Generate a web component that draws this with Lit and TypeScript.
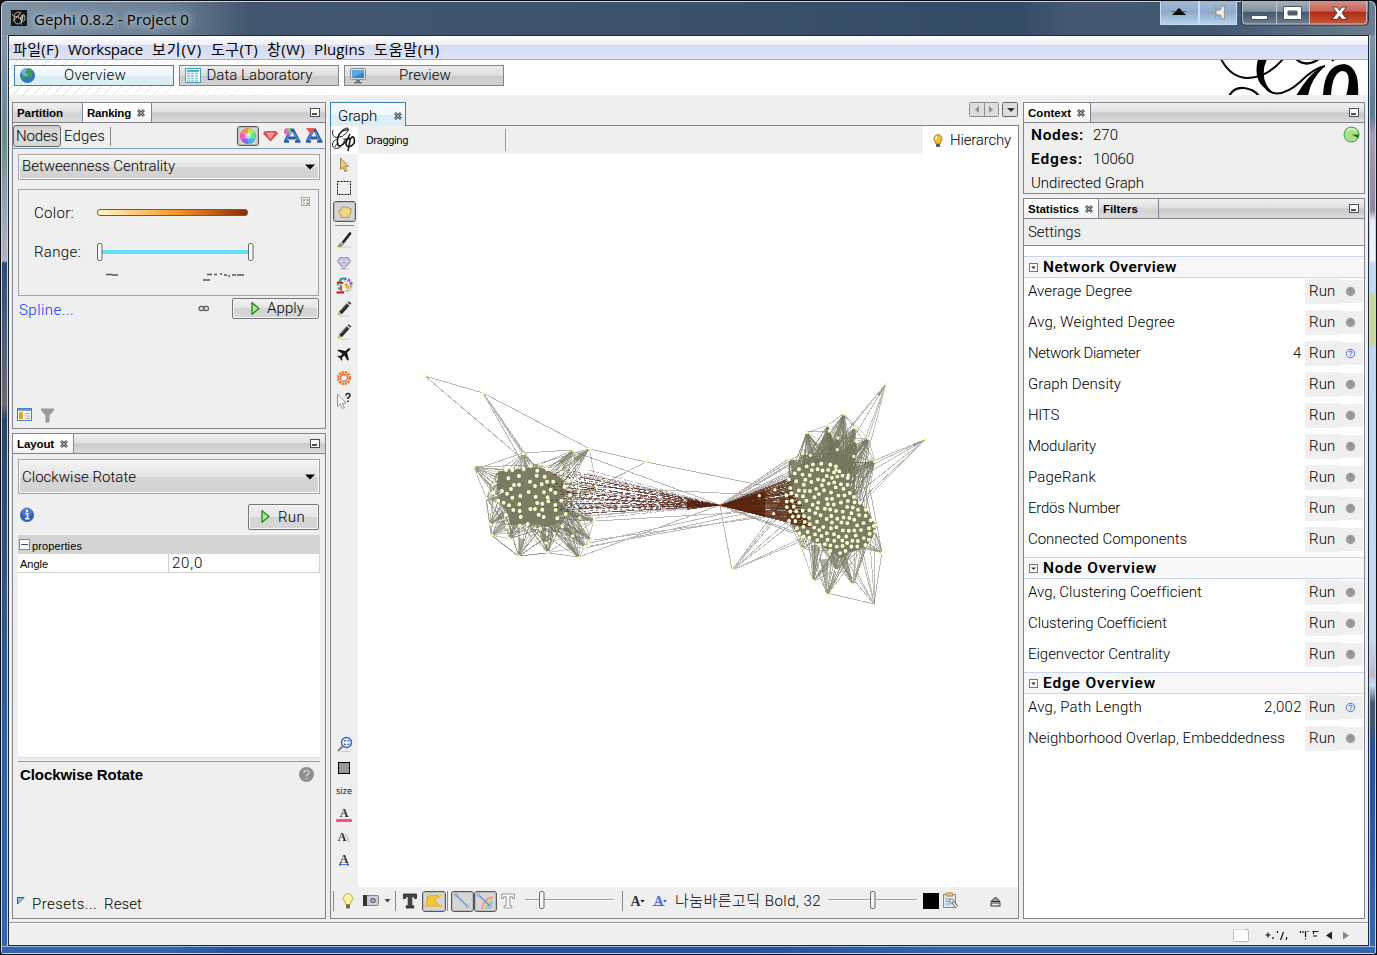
import { LitElement, html, svg, css } from "lit";
import { customElement } from "lit/decorators.js";

/* ---------- text fitted to a run length ---------- */
const FACES: Record<string, string> = {
  g: '300 15px Roboto, "Noto Sans CJK KR", sans-serif',
  gb: '600 15.5px Roboto, "Noto Sans CJK KR", sans-serif',
  tab: 'bold 11.5px "Liberation Sans", sans-serif',
  menu: '15px "Open Sans", "Noto Sans CJK KR", sans-serif',
  sm: '11px "Liberation Sans", sans-serif',
  vd: '10px "DejaVu Sans", sans-serif',
  hd: 'bold 15px "Liberation Sans", sans-serif',
};
const ctx = document.createElement("canvas").getContext("2d")!;
const t = (text: string, width: number, face = "g") => {
  ctx.font = FACES[face];
  const ls = (width - ctx.measureText(text).width) / text.length;
  return html`<span class="t ${face}" style="letter-spacing:${ls.toFixed(3)}px">${text}</span>`;
};
const faces = css`
  .t { white-space: pre; display: inline-block; line-height: 20px; height: 20px; }
  .g { font: 300 15px/20px Roboto, "Noto Sans CJK KR", sans-serif; }
  .gb { font: 600 15.5px/20px Roboto, "Noto Sans CJK KR", sans-serif; }
  .tab { font: bold 11.5px/20px "Liberation Sans", sans-serif; }
  .menu { font: 15px/20px "Open Sans", "Noto Sans CJK KR", sans-serif; }
  .sm { font: 11px/20px "Liberation Sans", sans-serif; }
  .vd { font: 10px/20px "DejaVu Sans", sans-serif; }
  .hd { font: bold 15px/20px "Liberation Sans", sans-serif; }
  :host { display: block; box-sizing: border-box; }
  * { box-sizing: border-box; }
  svg { display: block; flex: none; }
`;

/* an svg whose user units are window coordinates */
const art = (x: number, y: number, w: number, h: number, body: unknown) =>
  html`<svg width=${w} height=${h} viewBox="${x} ${y} ${w} ${h}">${body}</svg>`;

const closeX = html`<svg width="8" height="8" viewBox="0 0 8 8"><path d="M1 1L7 7M7 1L1 7" stroke="#4c4c4c" stroke-width="2.800"/><path d="M1 1L7 7M7 1L1 7" stroke="#ddd" stroke-width=".7"/></svg>`;
const minBox = html`<svg width="10" height="10" viewBox="0 0 10 10"><rect x=".5" y=".5" width="9" height="8" fill="#fff" stroke="#4a4f5a"/><rect x="2" y="5" width="5" height="2" fill="#4a4f5a"/></svg>`;
const play = html`<svg width="9" height="13" viewBox="0 0 9 13"><path d="M1 .8V12.200L8 6.500Z" fill="#b4e49c" stroke="#178a17" stroke-width="1.300"/></svg>`;
const bulb = (x: number, y: number) => svg`<g transform="translate(${x} ${y})"><path d="M5 .6a4.200 4.200 0 0 0-2.600 7.400l.6 2h4l.6-2A4.200 4.200 0 0 0 5 .6Z" fill="#f0c030" stroke="#a87a14" stroke-width=".9"/><path d="M4 2.500q-1.500 1-1 3" stroke="#fff" fill="none" stroke-width="1.500"/><rect x="3" y="10" width="4" height="3" rx="1" fill="#555"/></g>`;

/* ---------- statistics rows ---------- */
@customElement("stat-row")
class StatRow extends LitElement {
  static properties = { label: {}, w: { type: Number }, val: {}, vw: { type: Number } };
  declare label: string; declare w: number; declare val: string; declare vw: number;
  static styles = [faces, css`
    .row { display: flex; height: 31px; padding: 1px 0 0 4px; align-items: flex-start; }
    .name { flex: 1; padding-top: 2px; }
    .v { padding: 2px 3px 0 0; }
    .run { width: 35px; height: 25px; background: #efefef; padding: 2px 0 0 4px; }
    .q { width: 23px; height: 23px; background: #efefef; margin: 1px 1px 0 0; padding: 6px 0 0 5px; }
  `];
  render() {
    const q = this.val
      ? svg`<circle cx="5.500" cy="5.500" r="4.200" fill="#eef3ff" stroke="#4f74d8"/><path d="M4 4.500Q4 3 5.500 3T7 4.400Q7 5.200 5.500 5.900M5.500 7V8" fill="none" stroke="#3058c8"/>`
      : svg`<circle cx="5.500" cy="5.500" r="4.700" fill="#9d9d9d"/><path d="M4 4.500Q4 3 5.500 3T7 4.400Q7 5.200 5.500 5.900M5.500 7V8" fill="none" stroke="#868686"/>`;
    return html`<div class="row"><div class="name">${t(this.label, this.w)}</div>
      ${this.val ? html`<div class="v">${t(this.val, this.vw)}</div>` : ""}
      <div class="run">${t("Run", 26.5)}</div><div class="q"><svg width="11" height="11">${q}</svg></div></div>`;
  }
}

/* ---------- graph canvas ---------- */
let seed = 7;
const rnd = () => { seed = (seed * 16807) % 2147483647; return seed / 2147483647; };
type P = [number, number];
const pts = (s: string, ox: number, oy: number): P[] =>
  s.split(" ").map((p) => { const [a, b] = p.split(",").map(Number); return [ox + a / 3, oy + b / 3] as P; });
const inside = (p: P, poly: P[]) => {
  let r = false;
  for (let i = 0, j = poly.length - 1; i < poly.length; j = i++) {
    const [xi, yi] = poly[i], [xj, yj] = poly[j];
    if (yi > p[1] !== yj > p[1] && p[0] < ((xj - xi) * (p[1] - yi)) / (yj - yi) + xi) r = !r;
  }
  return r;
};
const fill = (poly: P[], n: number, d: number): P[] => {
  const out: P[] = [];
  const xs = poly.map((p) => p[0]), ys = poly.map((p) => p[1]);
  const x0 = Math.min(...xs), x1 = Math.max(...xs), y0 = Math.min(...ys), y1 = Math.max(...ys);
  for (let k = 0; k < 20000 && out.length < n; k++) {
    const p: P = [x0 + rnd() * (x1 - x0), y0 + rnd() * (y1 - y0)];
    if (inside(p, poly) && out.every((o) => Math.hypot(o[0] - p[0], o[1] - p[1]) > d)) out.push(p);
  }
  return out;
};
const line = (a: P, b: P) => `M${a[0].toFixed(1)} ${a[1].toFixed(1)}L${b[0].toFixed(1)} ${b[1].toFixed(1)}`;
const poly = (p: P[]) => p.map((q) => q.map((v) => v.toFixed(1)).join(",")).join(" ");
const dots = (p: P[]) => p.map((q) => `M${q[0].toFixed(1)} ${q[1].toFixed(1)}h0`).join("");

const L_OUT = pts("192,322 340,281 490,271 538,266 229,415 239,492 245,525 298,536 326,589 414,578 507,593 525,560 543,539 552,484 488,528 408,549 433,520 509,474 505,396 260,335 390,313 560,381 255,371", 410, 360);
const L_CORE = pts("288,330 307,330 341,328 363,318 382,332 411,328 454,338 476,362 464,380 295,355 327,348 380,347 404,350 360,365 375,378 395,373 411,365 430,365 327,374 312,375 303,387 276,393 291,401 307,413 331,408 356,396 377,410 402,397 422,389 436,398 413,412 415,424 480,406 454,422 436,435 437,450 397,431 382,429 397,449 375,447 361,447 328,433 297,436 281,428 265,422 310,450 329,453 332,471 287,465 291,500 330,497 353,492 391,506 401,471 386,464 442,475 457,499 467,462 250,398", 410, 360);
const L_POLY = pts("262,335 300,329 340,326 370,320 412,330 440,345 462,362 458,385 478,396 462,410 456,430 462,450 442,470 450,486 430,494 408,502 385,494 350,493 300,495 297,475 290,455 266,423 274,400 260,385 266,365", 410, 360);
const FAR = pts("648,41 768,208 187,600 614,706", 670, 370);
const R_OUT = pts("522,132 474,166 410,188 555,173 596,206 558,213 504,204 478,183 614,275 398,251 357,269 421,256 502,239 551,259 268,377 315,359 396,536 430,633 472,675 499,601 550,644 637,548 620,464 535,315 311,431 498,300", 670, 370);
const R_POLY = pts("355,330 375,305 405,285 460,275 500,285 535,320 541,370 575,403 598,430 612,465 618,480 600,515 565,540 535,548 515,565 480,543 440,520 395,498 375,480 355,450 345,390", 670, 370);
const R_CORE = fill(R_POLY, 172, 5.200);
const HUB: P = [720.5, 505.5];

const spray = (outs: P[], core: P[], reach: number, n: number) => {
  let d = "";
  for (const o of outs) {
    const near = [...core].sort((a, b) => Math.hypot(a[0] - o[0], a[1] - o[1]) - Math.hypot(b[0] - o[0], b[1] - o[1])).slice(0, reach);
    for (let i = 0; i < n; i++) d += line(o, near[Math.floor(rnd() * near.length)]);
  }
  return d;
};
const mesh = (outs: P[], max: number, p: number) => {
  let d = "";
  outs.forEach((a, i) => outs.slice(i + 1).forEach((b) => {
    if (Math.hypot(a[0] - b[0], a[1] - b[1]) < max && rnd() < p) d += line(a, b);
  }));
  return d;
};
/* thin wedges where many edges meet at one node */
const wedges = (outs: P[], c: P, half: number, reach: number) => outs.map(([x, y]) => {
  const dx = c[0] - x, dy = c[1] - y, l = Math.hypot(dx, dy) || 1;
  const ex = x + (dx / l) * reach, ey = y + (dy / l) * reach, nx = (-dy / l) * half, ny = (dx / l) * half;
  return `M${x.toFixed(1)} ${y.toFixed(1)}L${(ex + nx).toFixed(1)} ${(ey + ny).toFixed(1)}L${(ex - nx).toFixed(1)} ${(ey - ny).toFixed(1)}Z`;
}).join("");

@customElement("graph-view")
class GraphView extends LitElement {
  static styles = css`:host { display: block; } svg { display: block; background: #fff; }`;
  render() {
    const leftFan = Array.from({ length: 20 }, (_, i) => line([546 + rnd() * 22, 470 + i * 2.2], HUB)).join("");
    const leftSolid = Array.from({ length: 8 }, (_, i) => line([566 + rnd() * 20, 477 + i * 5.2], HUB)).join("");
    const leftGrey = Array.from({ length: 24 }, () => line([550 + rnd() * 46, 468 + rnd() * 62], HUB)).join("");
    const rightFan = Array.from({ length: 42 }, (_, i) => line([780 + rnd() * 14 + i * 0.5, 478 + i * 1.2], HUB)).join("");
    const rightGrey = Array.from({ length: 26 }, () => { const a = rnd(); return line([788 + a * 14, 462 + rnd() * 72], HUB); }).join("");
    const long = [
      [[425, 376], [483, 393]], [[425, 376], [519, 456]], [[483, 393], [590, 449]], [[483, 393], [524, 454]],
      [[483, 393], [530, 465]], [[484, 394], [534, 466]], [[483, 393], [521, 460]], [[523, 453], [573, 450]],
      [[590, 449], [646, 462]], [[646, 462], [760, 485]], [[646, 462], [597, 487]], [[575, 452], [720, 505]],
      [[720, 505], [732, 570]], [[579, 557], [720, 505]], [[594, 540], [780, 515]], [[590, 543], [740, 510]],
      [[590, 546], [770, 514]], [[596, 521], [784, 510]], [[597, 487], [760, 495]], [[585, 548], [784, 505]],
      [[720, 505], [802, 453]], [[720, 505], [788, 462]], [[720, 505], [790, 458]], [[474, 467], [530, 465]],
      [[827, 593], [874, 604]], [[882, 552], [874, 604]], [[870, 490], [882, 552]], [[860, 470], [872, 520]],
      [[806, 432], [828, 431]], [[828, 425], [843, 414]], [[843, 414], [855, 428]], [[482, 467], [523, 453]],
      [[491, 535], [518, 556]], [[518, 556], [548, 553]], [[548, 553], [579, 557]], [[486, 498], [491, 535]],
    ].map(([a, b]) => line(a as P, b as P)).join("");
    return html`<svg width="660" height="733" viewBox="358 154 660 733">
      <g fill="none" stroke-width="1" shape-rendering="crispEdges">
        <path d=${long} stroke="#77766a" stroke-opacity=".5"/>
        <path d=${spray(FAR, R_CORE, 34, 7)} stroke="#66654f" stroke-opacity=".4"/>
        <path d=${mesh(L_OUT, 42, 0.5)} stroke="#66654f" stroke-opacity=".36"/>
        <path d=${mesh(R_OUT, 44, 0.3)} stroke="#66654f" stroke-opacity=".36"/>
        <path d=${leftGrey} stroke="#7d7580" stroke-opacity=".5" stroke-dasharray="6 1 3 2"/>
        <path d=${rightGrey} stroke="#706a6a" stroke-opacity=".5"/>
      </g>
      <polygon points=${poly(L_POLY)} fill="#7d7c66"/>
      <polygon points=${poly(R_POLY)} fill="#7d7c66"/>
      <g fill="none" stroke="#6e6d58" stroke-opacity=".42" shape-rendering="crispEdges" stroke-width="1">
        ${L_OUT.map((o) => svg`<path d=${spray([o], L_CORE, 24, 9)}/><path d=${spray([o], L_CORE, 16, 7)}/>`)}
        ${R_OUT.map((o) => svg`<path d=${spray([o], R_CORE, 40, 10)}/><path d=${spray([o], R_CORE, 26, 8)}/>`)}
        ${R_OUT.slice(0, 14).map((o) => svg`<path d=${spray([o], R_CORE, 46, 10)}/><path d=${spray([o], R_CORE, 60, 9)}/>`)}
      </g>
      <g fill="#7a7963" fill-opacity=".6">
        <path d=${wedges([...R_OUT.slice(0, 9), ...R_OUT.slice(17, 21)], [818, 490], 4.500, 36)}/>
        <path d=${wedges(R_OUT.slice(9, 14), [818, 490], 8, 20)}/>
        <path d=${wedges(L_OUT.slice(1, 18), [530, 496], 3, 18)}/>
        <path d=${wedges(FAR.slice(0, 2), [818, 490], 1.500, 14)}/>
      </g>
      <polygon points=${poly(L_POLY)} fill="#7d7c66" fill-opacity=".75"/>
      <polygon points=${poly(R_POLY)} fill="#7d7c66" fill-opacity=".8"/>
      <g fill="none" shape-rendering="crispEdges">
        <path d=${leftFan} stroke="#541a08" stroke-opacity=".6" stroke-dasharray="3 3 2 4"/>
        <path d=${leftSolid} stroke="#4a1c10" stroke-opacity=".7" stroke-dasharray="14 2 6 5"/>
        <path d="M720 505L687 500V510ZM720 505L765 491V517Z" fill="#501800" fill-opacity=".7"/>
        <path d=${rightFan} stroke="#501800" stroke-opacity=".72"/>
      </g>
      <path d=${dots([...L_CORE, ...R_CORE])} stroke="#ffffcf" stroke-width="3.900" stroke-linecap="round"/>
      <path d=${dots([...L_OUT, ...R_OUT, ...FAR, [425, 376], [483, 393], [646, 462], [619, 506]])} stroke="#fcfcb8" stroke-width="3.300" stroke-linecap="round"/>
      <circle cx=${HUB[0]} cy=${HUB[1]} r="1.300" fill="#e03010"/>
    </svg>`;
  }
}

/* ---------- application ---------- */
const letterA = (x: number, y: number) =>
  svg`<path d="M${x + 1} ${y - 1}L${x + 6.500} ${y - 12}H${x + 8.500}L${x + 14} ${y - 1}M${x + 4} ${y - 4}H${x + 11}" fill="none" stroke="#2d5fa8" stroke-width="3"/><path d="M${x - 0.500} ${y - 0.500}h5M${x + 10.500} ${y - 0.500}h5.500" stroke="#2d5fa8" stroke-width="2.500"/><path d="M${x + 2} ${y - 2}L${x + 6.500} ${y - 11}M${x + 9} ${y - 10}L${x + 13} ${y - 2}" stroke="#7da7dd" stroke-width=".9"/>`;
const serifA = (x: number, y: number, c: string, s = 12, cls = "") =>
  svg`<text class=${cls} x=${x} y=${y} font-family="Liberation Serif, serif" font-weight="bold" font-size=${s} text-anchor="middle" fill=${c}>A</text>`;
const knob = (x: number, y: number) => svg`<rect x=${x} y=${y} width="4.500" height="17" rx="1.500" fill="#f6f6f6" stroke="#686868"/>`;
const pressed = (x: number, y: number, w: number, h: number) => svg`<rect x=${x + 0.5} y=${y + 0.5} width=${w - 1} height=${h - 1} rx="2.500" fill="#d6d6d6" stroke="#55585c"/><rect x=${x + 1.5} y=${y + 1.5} width=${w - 3} height=${h - 3} rx="1.500" fill="none" stroke="#bababa"/>`;
const pencil = (y: number) => svg`<path d="M340 ${y + 7}h10" stroke="#ccc"/><path d="M340.500 ${y + 4}L348 ${y - 4.500}" stroke="#2b2b2b" stroke-width="3.600"/><path d="M337.500 ${y + 6.500}l1.300-3.700 2.700 2.500Z" fill="#c8a850"/><path d="M348.800 ${y - 5.300}l1.300-1.400" stroke="#444" stroke-width="3.400"/><path d="M341 ${y + 2}l6-7" stroke="#777" stroke-width=".7"/>`;
const sep = (x: number, y: number, h: number) => svg`<path d="M${x + 0.5} ${y}v${h}" stroke="#8a8a8a"/>`;
const T = (x: number, f: string, s: string) => svg`<path d="M${x} 894h13v4.500h-2v-1.700h-2.700v9h2v2.200h-7.600v-2.200h2v-9h-2.700v1.700h-2Z" fill=${f} stroke=${s} stroke-width=".8"/>`;

const TOOLS = [
  svg`<path d="M340.500 158v11.500l2.500-2.300 2 4.500 2-.9-2-4.300 3.500-.3Z" fill="#eccb80" stroke="#9a7a35" stroke-width=".9"/>`,
  svg`<rect x="337.500" y="181.500" width="13" height="13" fill="none" stroke="#111" stroke-dasharray="2 1"/>`,
  svg`${pressed(333, 201, 23, 21)}<path d="M341 217.500v-2.500l-2.500-3 1-1.800 1.500.8v-3.500l1.800-1 1 1.300 1.400-1.300 1.500 1.300 1.300-.8 1.500 1.600 1.500 0v4l-2 3v2Z" fill="#f2d68c" stroke="#b08c44" stroke-width=".9"/>`,
];
const TOOLS2 = [
  svg`<path d="M340 247h11" stroke="#ccc"/><path d="M343 242.500L350 233.500" stroke="#262626" stroke-width="2.800" stroke-linecap="round"/><path d="M342 243l2 1.500" stroke="#999" stroke-width="2"/><path d="M337.500 247.500q.5-4 3-4.500l2.500 2q-1 2.500-5.500 2.500Z" fill="#a8975a"/>`,
  svg`<path d="M340 269h9" stroke="#ccc" stroke-width="1.500"/><path d="M340 257.500h8l3 3.500-7 8-7-8Z" fill="#b4b4d8" stroke="#8585a8" stroke-width=".9"/><path d="M337 261h14M341 261l3 7 3-7-3-3.500Z" fill="none" stroke="#e8e8fa" stroke-width=".8"/>`,
  svg`<circle cx="344" cy="285" r="6" fill="none" stroke="#30c068" stroke-width="2.500" stroke-dasharray="2.500 2"/><path d="M344 279a6 6 0 0 1 7 8" fill="none" stroke="#9a50d0" stroke-width="2.500" stroke-dasharray="2.500 1.500"/><path d="M340 279.500q2.500-1.500 5-.5" stroke="#3a90d0" stroke-width="2" fill="none"/><rect x="341" y="282" width="9" height="9" fill="#fff" stroke="#999" stroke-width=".6" transform="rotate(-12 345 286)"/><path d="M345.500 283.500l3 5.500" stroke="#f0b020" stroke-width="3.500"/><path d="M336.500 292.500h7.500M337 283q4-2 6 1" stroke="#c81820" stroke-width="1.800" fill="none"/><path d="M341 285v6" stroke="#d83038" stroke-width="1.500"/>`,
  pencil(309), pencil(332),
  svg`<path d="M350.500 348.500q-1.500-.8-3 .6l-2 2-7-1.600-1.200 1 5.300 3.200-2.200 2.400-2.300-.4-.8.9 2.600 1.500 1.500 2.700.9-.9-.3-2.300 2.500-2.200 3.100 5.300 1.200-1.200-1.700-7 2.200-2q1.500-1.300 1.200-2Z" fill="#1a1714"/>`,
  svg`<circle cx="344" cy="378" r="5.900" fill="none" stroke="#f4661c" stroke-width="2.200" stroke-dasharray="2.200 .89"/><circle cx="344" cy="378" r="3.500" fill="none" stroke="#f4661c" stroke-width="1.300"/>`,
  svg`<path d="M337.500 394v12.500l2.800-2.600 2.200 4.600 2-.9-2.200-4.500h4Z" fill="#fff" stroke="#888" stroke-width=".9"/><path d="M346 395.500q0-2 2-2t2 2q0 1.200-2 2.500v1M348 400.500v1.500" fill="none" stroke="#222" stroke-width="1.500"/>`,
];
const TOOLS3 = [
  svg`<path d="M341 751.500h9" stroke="#ccc"/><circle cx="346.500" cy="742.500" r="5" fill="#eef3ff" stroke="#3a62c8" stroke-width="1.400"/><path d="M344.500 741.500v-1h1.500M347.500 740.500h1.500v1M349 743.500v1h-1.500M346 744.500h-1.500v-1" fill="none" stroke="#2850b8"/><path d="M342.500 746.500L338 751" stroke="#888" stroke-width="2.300"/>`,
  svg`<rect x="338.500" y="762.500" width="11" height="11" fill="#999" stroke="#000"/>`,
  svg`<text x="344" y="794" font-family="Noto Sans, sans-serif" font-size="9" text-anchor="middle" fill="#222">size</text>`,
  svg`${serifA(344, 817, "#333")}<rect x="336" y="819" width="16" height="3" rx="1" fill="#ff4f80"/>`,
  svg`${serifA(342, 840.5, "#333", 12, "sh")}`,
  svg`${serifA(344, 863, "#333")}<path d="M339 864.500h10M341 863l-2 1.500 2 1.500M347 863l2 1.500-2 1.500" fill="none" stroke="#3260d0" stroke-width=".9"/>`,
];

const STATS: [string, number, [string, number, string?, number?][]][] = [
  ["Network Overview", 134, [["Average Degree", 104], ["Avg, Weighted Degree", 147], ["Network Diameter", 112, "4", 9], ["Graph Density", 93], ["HITS", 31], ["Modularity", 68], ["PageRank", 68], ["Erdös Number", 92], ["Connected Components", 159]]],
  ["Node Overview", 114, [["Avg, Clustering Coefficient", 173], ["Clustering Coefficient", 138], ["Eigenvector Centrality", 142]]],
  ["Edge Overview", 113, [["Avg, Path Length", 114, "2,002", 38], ["Neighborhood Overlap, Embeddedness", 257]]],
];

@customElement("app-root")
class AppRoot extends LitElement {
  static styles = [faces, css`
    :host { width: 1377px; height: 955px; color: #000; overflow: hidden; background: #0a0f18; }
    .sh { filter: drop-shadow(4px 1px 0 #ccc); }
    .win { height: 955px; border: 1px solid #0a0f18; border-radius: 7px 7px 4px 4px; overflow: hidden; display: grid; grid-template: 34px 911px 8px / 7px 1361px 7px;
      background: linear-gradient(90deg, #8093a5, #6b7f94 12%, #42576f 18%, #3c526b 45%, #344b68 74%, #445971 78%, #40566f 88%, #6c7e8f); box-shadow: inset 0 0 0 1px #c5d3e2; }
    .title { grid-column: 1 / 4; display: flex; padding-left: 10px; position: relative; }
    .glyph { padding-top: 9px; width: 23px; }
    .caption { padding: 8px 0 0 0; width: 170px; text-shadow: 0 0 5px #b4c1cd, 0 0 9px #b4c2cf, 0 0 12px #a9b8c6, 0 0 14px #a9b8c6; }
    .wctl { margin-left: auto; padding-right: 5px; }
    .edge { border: solid #c5d3e2; border-width: 0 1px; }
    .el { background: linear-gradient(#8195a8 0, #74889c 80px, #6d9183 110px, #8e9aa8 150px, #a8adb8 205px, #b0b4be 226px, #2f4a72 228px, #4e5e78 300px, #6f6870 370px, #2c4564 385px, #34557d 560px, #2f5f9d 700px, #3565ac); }
    .er { background: linear-gradient(#8195a8 0, #5b7a95 80px, #a49db0 100px, #90889c 175px, #e4edf8 185px, #f0f5fb 225px, #c2d9f5 228px, #c2d9f5 256px, #c6d79c 262px, #c6d79c 308px, #bcd6f4 315px, #c8dcf0 600px, #bcb8cc 640px, #c8dcf0 650px, #44586f 668px, #44586f 690px, #26519a 710px, #3565ac); }
    .foot { grid-column: 1 / 4; background: linear-gradient(90deg, #3565ac, #3565ac 12%, #24539a 17%, #24539a 55%, #3565ac 70%, #3565ac); border: 1px solid #c5d3e2; border-top-color: #9fb4d0; }
    .client { border: 1px solid #1c2a3a; background: #efefef; display: flex; flex-direction: column; padding: 0; }
    .menubar { height: 24px; background: linear-gradient(#fff, #eceff8 9px, #d3daed 9px, #dfe5f6); border-bottom: 1px solid #a9a9c0; display: flex; gap: 9px; padding: 3px 0 0 4px; }
    .banner { height: 35px; background: linear-gradient(90deg, #fff0, #fff 330px), repeating-linear-gradient(135deg, #fff 0 6.300px, #d8d8d8 6.300px 7.070px); display: flex; gap: 5px; padding: 5px 0 0 5px; }
    .mode { width: 160px; height: 21px; border: 1px solid #83838f; background: linear-gradient(#ececec, #dcdcdc 50%, #cacaca 50%, #d2d2d2); display: flex; padding-left: 4px; }
    .mode.on { border-color: #3c7fb1; background: linear-gradient(#f8fcff, #eaf6fc 50%, #dbeef7 50%, #dcecf3); }
    .mode .i { padding-top: 1px; width: 22px; }
    .mode .l { flex: 1; text-align: center; margin: -1px 24px 0 0; white-space: nowrap; }
    .mode .l.wide { margin-right: 25px; }
    .brand { margin: -5px 0 0 auto; }
    .main { height: 827px; display: grid; grid-template-columns: 314px 689px 342px; gap: 4px; padding: 7px 3px 3px; }
    .col { display: flex; flex-direction: column; gap: 4px; height: 817px; }
    .panel { border: 1px solid #83838f; background: #efefef; display: flex; flex-direction: column; }
    .ptop { height: 327px; }
    .grow { flex: 1; }
    .tabs { height: 20px; flex: none; border-bottom: 1px solid #83838f; background: linear-gradient(#f0f0f0 1px, #dedede 9px, #c9c9c9 10px, #dadada); display: flex; }
    .tb { height: 19px; border-right: 1px solid #83838f; padding: 1px 0 0 4px; display: flex; gap: 6px; align-items: center; background: linear-gradient(#f0f0f0 1px, #dedede 9px, #d2d2d2 10px, #dadada); }
    .tb svg { margin-top: -1px; }
    .tb.on { background: linear-gradient(#fff, #fff 50%, #f0f0f0); }
    .w69 { width: 70px; } .w69b { width: 69px; } .w61 { width: 61px; } .w67 { width: 67px; } .w75 { width: 75px; } .w60 { width: 60px; }
    .min { margin: 5px 5px 0 auto; }
    .rtool { height: 26px; border-bottom: 1px solid #7a9bb9; display: flex; }
    .rtool .n { width: 48px; height: 22px; margin-top: 2px; border: 1px solid #6a6a6a; border-radius: 3px; background: linear-gradient(#c8c8c8, #dadada 4px, #d6d6d6); padding: 0 0 0 2px; }
    .rtool .e { padding: 3px 0 0 3px; width: 50px; background: linear-gradient(#888, #888) right 4px / 1px 19px no-repeat; height: 26px; }
    .rtool .ic { margin-left: auto; }
    .combo { margin: 5px 5px 0 5px; height: 26px; width: 302px; border: 1px solid #a2a2a8; box-shadow: inset 0 0 0 1px #fbfbfb; background: linear-gradient(#f4f4f4, #e4e4e4 50%, #d6d6d6 50%, #d2d2d2); display: flex; justify-content: space-between; align-items: center; padding: 0 4px 2px 3px; }
    .combo svg { margin-top: 2px; }
    .combo.tall { height: 35px; padding-bottom: 0; }
    .combo.tall svg { margin-top: 0; }
    .box { margin: 9px 0 0 5px; width: 301px; height: 107px; border: 1px solid #a2a2a8; display: grid; grid-template-columns: 62px 222px; padding-left: 15px; overflow: hidden; }
    .lbl { display: flex; flex-direction: column; gap: 19px; padding-top: 13px; }
    .acts { display: flex; padding: 2px 6px 0 6px; height: 24px; }
    .blue { color: #0b36ff; padding-top: 2px; }
    .push { margin-left: auto; border: 1px solid #75757c; border-radius: 2px; box-shadow: inset 0 0 0 1px #f6f6f6; background: linear-gradient(#f0f0f0, #e4e4e4 50%, #d4d4d4 50%, #d6d6d6); display: flex; align-items: center; }
    .push .t { margin-top: -1px; }
    .push svg { margin-top: -1px; }
    .apply { width: 87px; height: 21px; padding-left: 18px; gap: 7px; }
    .rung { width: 71px; height: 26px; padding-left: 12px; gap: 8px; }
    .bl { margin-top: auto; }
    .lrun { display: flex; padding: 10px 6px 0 6px; height: 41px; }
    .props { margin: 0 5px; width: 302px; height: 223px; background: #fff; border-bottom: 1px solid #ddd; }
    .ph { height: 19px; background: #d3d3d3; display: flex; align-items: center; gap: 2px; padding-left: 1px; }
    .ph .t { margin-top: 2px; }
    .pr { height: 19px; display: grid; grid-template-columns: 150px 149px; border: solid #d3d3d3; border-width: 0 1px 1px 0; padding-left: 2px; }
    .pr .c { border-left: 1px solid #d3d3d3; padding-left: 3px; margin-left: -2px; height: 18px; }
    .pr .c .t { margin-top: -2px; }
    .desc { margin: 3px 5px 0; border-top: 1px solid #999; padding: 3px 5px 0 2px; display: flex; justify-content: space-between; }
    .pre { margin-top: auto; display: flex; align-items: flex-end; padding: 0 0 4px 3px; gap: 7px; }
    .pre svg { margin-bottom: 8px; }
    .gtabs { height: 23px; display: flex; }
    .gt { width: 76px; height: 24px; border: 1px solid #3c7fb1; border-bottom: 0; background: linear-gradient(#f8fcff, #eef8fd 50%, #dceef7 50%, #dceff8); display: flex; gap: 17px; align-items: center; padding: 2px 0 0 7px; position: relative; }
    .gnav { margin-left: auto; }
    .gbody { width: 689px; height: 794px; display: grid; grid-template: 28px 733px 31px / 27px 660px; }
    .logo { background: #fff; }
    .gtop { display: flex; }
    .drag { padding: 4px 0 0 8px; width: 148px; height: 21px; }
    .gsep { width: 1px; height: 22px; margin: 3px 0 0 -1px; background: #999; }
    .hier { margin-left: auto; width: 95px; background: #fff; display: flex; padding: 4px 0 0 27px; position: relative; }
    .hier svg { position: absolute; left: 9px; top: 8px; }
    .strip { display: flex; flex-direction: column; }
    .low { margin-top: auto; padding-bottom: 16px; }
    .bot { grid-column: 1 / 3; display: flex; }
    .font { width: 154px; padding: 4px 0 0 2px; }
    .cx { display: grid; grid-template-columns: 62px 1fr 21px; padding: 2px 0 0 7px; row-gap: 4px; height: 70px; }
    .und { grid-column: 1 / 4; }
    .settings { height: 27px; border-bottom: 1px solid #6c8fb5; padding: 3px 0 0 4px; }
    .list { flex: 1; background: #fff; padding-top: 10px; }
    .sec { height: 22px; border: solid #cbd6f4; border-width: 1px 0; background: #f7f7f7; display: flex; align-items: center; gap: 5px; padding: 0 0 0 5px; }
    .status { height: 24px; border-top: 1px solid #9a9a9a; box-shadow: inset 0 1px #fff; display: flex; justify-content: flex-end; }
  `];

  render() {
    return html`<div class="win">
      <div class="title">
        <div class="glyph">${art(11, 10, 16, 16, svg`<rect x="11" y="10" width="16" height="16" fill="#111"/><path d="M19 12q-5 0-5 6t4 6q4-1 5-8M12 14q3 5 7 1t0-2M18 18h5M22 15q-3 5 0 6t3-3-2-3M23 14l-2 11M13 21q3-4 6-5" fill="none" stroke="#ddd" stroke-width=".8"/>`)}</div>
        <div class="caption">${t("Gephi 0.8.2 - Project 0", 155, "menu")}</div>
        <div class="wctl">${art(1159, 1, 212, 26, svg`
          <defs><linearGradient id="r" x2="0" y2="1"><stop offset="0" stop-color="#d99488"/><stop offset=".45" stop-color="#c8665a"/><stop offset=".5" stop-color="#b12c17"/><stop offset="1" stop-color="#c75a3a"/></linearGradient>
          <linearGradient id="d" x2="0" y2="1"><stop offset="0" stop-color="#a9b5c0"/><stop offset=".45" stop-color="#82909f"/><stop offset=".5" stop-color="#46586c"/><stop offset="1" stop-color="#6f8296"/></linearGradient>
          <linearGradient id="b" x2="0" y2="1"><stop offset="0" stop-color="#a3bad4"/><stop offset=".5" stop-color="#8eabcc"/><stop offset="1" stop-color="#b8d4f0"/></linearGradient></defs>
          <rect x="1160.500" y="0" width="38" height="24.500" fill="url(#b)" stroke="#c9dcf2"/><rect x="1199.500" y="0" width="37" height="24.500" fill="url(#b)" stroke="#c9dcf2"/>
          <path d="M1179 8l7 7h-14Z"/><path d="M1171 11.500h16" stroke="#345" stroke-width=".6"/><path d="M1209.500 12.500h6M1215.500 6.500v12M1216 9.500q3 1.500 5-.5v-2.500l3.500-.5v13l-3.500-.5v-2.500q-2-2-5-.5Z" fill="#eee" stroke="#999" stroke-width="1.200"/>
          <path d="M1241.500 0v21q0 4 4 4h119q4 0 4-4V0Z" fill="url(#d)" stroke="#28323e"/><path d="M1310 0v24.500h54q4 0 4-4V0Z" fill="url(#r)"/>
          <path d="M1242.500 1v20q0 3 3 3h118q3 0 3-3V1M1276.500 1v23M1309.500 1v23" fill="none" stroke="#cdd6de" stroke-opacity=".8"/>
          <rect x="1251.500" y="15.500" width="16" height="4" fill="#fff" stroke="#4b5661"/><path d="M1283.500 6.500h18v13h-18ZM1288 11h9v4h-9Z" fill="#fff" fill-rule="evenodd" stroke="#4b5661"/>
          <path d="M1332.500 7h4.500l2.500 3.500 2.500-3.500h4.500l-4.500 6 5 6.500h-5l-2.500-3.500-2.500 3.500h-5l5-6.500Z" fill="#fff" stroke="#5b3838"/>`)}</div>
      </div>
      <div class="edge el"></div>
      <div class="client">
        <div class="menubar">${t("파일(F)", 46, "menu")}${t("Workspace", 75, "menu")}${t("보기(V)", 50, "menu")}${t("도구(T)", 47, "menu")}${t("창(W)", 38, "menu")}${t("Plugins", 51, "menu")}${t("도움말(H)", 66, "menu")}</div>
        <div class="banner">
          <div class="mode on"><div class="i">${art(19, 67, 17, 17, svg`<circle cx="27.500" cy="75.500" r="7.500" fill="#2a78c0"/><circle cx="26" cy="72" r="4.500" fill="#9fd0f0" fill-opacity=".6"/><path d="M27 69q5-1 6 3l-2 6-3-1v-3l-3-1ZM21 74l3 2 1 4-3-1Z" fill="#3f9c45"/>`)}</div><div class="l">${t("Overview", 62)}</div></div>
          <div class="mode"><div class="i">${art(184, 67, 17, 17, svg`<rect x="185.500" y="68.500" width="15" height="14" fill="#fff" stroke="#4aa0b0"/><path d="M187 73.500h12M187 76h12M187 78.500h12M187 81h12" stroke="#6fc8e8" stroke-width="1.600" stroke-dasharray="3 1"/><rect x="187" y="70" width="12" height="1.800" fill="#3aa6d8"/>`)}</div><div class="l wide">${t("Data Laboratory", 106)}</div></div>
          <div class="mode"><div class="i">${art(349, 67, 17, 17, svg`<rect x="350.500" y="68.500" width="15" height="11" rx="1" fill="#ddd" stroke="#8a8f98"/><rect x="352" y="70" width="12" height="8" fill="#2f83cf"/><path d="M352 78l12-6v-2h-12Z" fill="#5ea6e2"/><path d="M356 80h4v2h2v1.500h-8V82h2Z" fill="#777"/>`)}</div><div class="l">${t("Preview", 52)}</div></div>
          <div class="brand">${art(1218, 60, 150, 35, svg`<g fill="none" stroke="#060808"><path d="M1221 59Q1231 78 1248 78Q1268 77 1283 59" stroke-width="2"/><path d="M1229 96Q1234 87 1244 88Q1254 89 1259 96" stroke-width="2.200"/><path d="M1265 86Q1268 93 1277 93.500Q1288 93 1300 82Q1314 68 1325 66" stroke-width="2"/><path d="M1296 59Q1306 68 1319 59M1332 61l2-2" stroke-width="2.200"/></g>
            <path d="M1258 59H1267Q1261 72 1266 84Q1269 90 1276 94Q1251 86 1258 59Z"/><path d="M1325 66Q1311 70 1296 96H1308Q1310 80 1325 66Z"/><path d="M1323 96Q1324 65 1344 64Q1360 66 1358 96H1346Q1353 71 1342 71Q1332 73 1331 96Z"/>`)}</div>
        </div>
        <div class="main">${this.left()}${this.center()}${this.right()}</div>
        <div class="status">${art(1228, 923, 140, 22, svg`<rect x="1233.500" y="929.500" width="15" height="12" rx="1" fill="#fff" stroke="#bbb"/><path d="M1234 929.500h12" stroke="#ddd"/><path d="M1246 929.500h2" stroke="#d88"/><path d="M1265.500 935h5M1268 932.500v5M1273.500 937l-1 2M1277.500 931v2M1283.500 932l-3 8M1287 937l-1 3M1300.500 931v2M1303 931v2M1305.500 931v6M1305.500 938.500v1M1308 931v1M1312.500 931.500h6M1313 936h4M1313.500 932v2" stroke="#111" stroke-width="1.200"/><path d="M1332 931.500v8l-6-4Z" fill="#222"/><path d="M1343 931.500v8l6-4Z" fill="#888"/>`)}</div>
      </div>
      <div class="edge er"></div>
      <div class="foot"></div>
    </div>`;
  }

  left() {
    const arrow = html`<svg width="10" height="6"><path d="M0 .5H10L5 5.500Z"/></svg>`;
    return html`<div class="col">
      <div class="panel ptop">
        <div class="tabs"><div class="tb w69">${t("Partition", 46, "tab")}</div><div class="tb on w69b">${t("Ranking", 44, "tab")}${closeX}</div><div class="min">${minBox}</div></div>
        <div class="rtool"><div class="n">${t("Nodes", 42)}</div><div class="e">${t("Edges", 41)}</div>
          <div class="ic">${art(236, 123, 89, 25, svg`${pressed(237, 126, 22, 20)}
            <path d="M248 136V128A8 8 0 0 1 255 132Z" fill="#c7ea50"/><path d="M248 136L255 132A8 8 0 0 1 255 140Z" fill="#50e890"/><path d="M248 136L255 140A8 8 0 0 1 248 144Z" fill="#40b4f4"/><path d="M248 136V144A8 8 0 0 1 241 140Z" fill="#9a5cf4"/><path d="M248 136L241 140A8 8 0 0 1 241 132Z" fill="#f85ac0"/><path d="M248 136L241 132A8 8 0 0 1 248 128Z" fill="#f8905a"/><circle cx="248" cy="136" r="3" fill="#fff" fill-opacity=".55"/><circle cx="248" cy="136" r="7.500" fill="none" stroke="#888" stroke-opacity=".4"/>
            <path d="M265 131h11l2 2.500-7.500 8-7.500-8Z" fill="#e04848"/><path d="M266 132.500h9l-4.500 7Z" fill="#f89a9a"/>
            ${letterA(284.5, 142)}<circle cx="287.500" cy="131.500" r="3.500" fill="#f060c0"/><path d="M287.500 128a3.500 3.500 0 0 1 3 5l-3-1.500Z" fill="#70e060"/><path d="M287.500 131.500l2 3-5-1Z" fill="#60a0f8"/>
            ${letterA(306.5, 142)}<path d="M306 128h9l-4.500 6Z" fill="#e85555"/>`)}</div></div>
        <div class="combo">${t("Betweenness Centrality", 153)}${arrow}</div>
        <div class="box"><div class="lbl">${t("Color:", 40)}${t("Range:", 47)}</div>
          ${art(96, 190, 222, 105, svg`<defs><linearGradient id="c"><stop offset="0" stop-color="#fffbc8"/><stop offset=".5" stop-color="#fb9c2e"/><stop offset="1" stop-color="#8a2c02"/></linearGradient></defs>
            <rect x="97.500" y="209.500" width="150" height="6" rx="2.500" fill="url(#c)" stroke="#6a5a50"/>
            <rect x="100" y="250" width="150" height="4" fill="#5fe0f8"/>${knob(97.5, 243.500)}${knob(248.5, 243.500)}
            <path d="M106 274.500h6M112 275h6M207 274.500h5M214 274.500h3M220 274h2M224 275h3M228 276h2M232 275h4M237 275h7M203 280h7" stroke="#555" stroke-width="1.600"/>
            <rect x="301.500" y="197.500" width="8" height="8" fill="#fff" stroke="#b0a8a0"/><path d="M303 200h2" stroke="#6ab06a" stroke-width="2"/><path d="M303 203.500h2" stroke="#c8a060" stroke-width="2"/><path d="M306.500 200h2" stroke="#d86060" stroke-width="2"/><path d="M306.500 203.500h2" stroke="#7a5ae0" stroke-width="2"/>`)}</div>
        <div class="acts"><div class="blue">${t("Spline...", 55)}</div>
          <svg width="137" height="20" viewBox="74 298 137 20"><rect x="199" y="306.500" width="5" height="4" rx="2" fill="none" stroke="#666" stroke-width="1.300"/><rect x="203.500" y="306.500" width="5" height="4" rx="2" fill="none" stroke="#666" stroke-width="1.300"/></svg>
          <div class="push apply">${play}${t("Apply", 37)}</div></div>
        <div class="bl">${art(13, 406, 60, 22, svg`<rect x="17.500" y="408.500" width="14" height="12" fill="#fff" stroke="#4a7cb8"/><path d="M18 410h13" stroke="#6aa0e0" stroke-width="2"/><rect x="19" y="412" width="4" height="7" fill="#f0a020"/><path d="M25 413.500h5M25 416h5M25 418.500h5" stroke="#aaa"/><path d="M41 408.500h13v2l-4.500 5v7h-4v-7l-4.500-5Z" fill="#9a9a9a"/>`)}</div>
      </div>
      <div class="panel grow">
        <div class="tabs"><div class="tb on w61">${t("Layout", 37, "tab")}${closeX}</div><div class="min">${minBox}</div></div>
        <div class="combo tall">${t("Clockwise Rotate", 114)}${arrow}</div>
        <div class="lrun">${art(19, 504, 16, 24, svg`<circle cx="27" cy="515" r="7" fill="#2f5fb8"/><circle cx="27" cy="512" r="5" fill="#6a94dc" fill-opacity=".5"/><path d="M25.500 513.500h2v5M25 518.800h4.500" stroke="#fff" stroke-width="1.600" fill="none"/><circle cx="27" cy="510.800" r="1.200" fill="#fff"/>`)}<div class="push rung">${play}${t("Run", 27)}</div></div>
        <div class="props"><div class="ph"><svg width="11" height="11"><rect x=".5" y=".5" width="10" height="10" fill="#fff" stroke="#888"/><path d="M2 5.500h7" stroke="#345080"/></svg>${t("properties", 50, "sm")}</div>
          <div class="pr">${t("Angle", 28, "sm")}<div class="c">${t("20,0", 31)}</div></div></div>
        <div class="desc">${t("Clockwise Rotate", 123, "hd")}<svg width="16" height="18" viewBox="0 0 16 18"><circle cx="7.500" cy="9.500" r="7.500" fill="#8e8e8e"/><path d="M5 8q0-2.500 2.500-2.500t2.500 2.300q0 1.200-2.500 2.700v1M7.500 12.800v1.600" fill="none" stroke="#c8c8c8" stroke-width="1.700"/></svg></div>
        <div class="pre">${art(16, 895, 9, 10, svg`<path d="M17.500 896.500h6.500l-6.500 6.500Z" fill="#8ccaf0" stroke="#1a5c98"/>`)}${t("Presets...", 65)}${t("Reset", 38)}</div>
      </div>
    </div>`;
  }

  center() {
    return html`<div>
      <div class="gtabs"><div class="gt">${t("Graph", 39)}${closeX}</div><div class="gnav">${art(968, 102, 51, 18, svg`
        <rect x="969.500" y="102.500" width="29" height="14" rx="1" fill="#dedede" stroke="#8a8d92"/><path d="M984.500 103v13" stroke="#8a8d92"/><path d="M979 106v7l-4-3.500ZM989 106v7l4-3.500Z" fill="#8d8d8d"/><rect x="1002.500" y="102.500" width="15" height="14" rx="1" fill="#dedede" stroke="#62666c"/><path d="M1007 108h8l-4 4Z" fill="#2a3a44"/>`)}</div></div>
      <div class="panel gbody">
        <div class="logo">${art(331, 126, 27, 27, svg`<g fill="none" stroke="#111"><path d="M348 130q-7-1-10 7-2 9 2 9 5-1 10-12" stroke-width="1.400"/><path d="M333 130q-2 7 4 7.500 6 0 10-5 3-4 0-4.500-5 0-9 9" stroke-width=".9"/><path d="M338 139q-5 1-5.500 5 0 4.500 4 4.500 5 0 9-10" stroke-width=".9"/><path d="M335 147q1-4 4-4M343 139h5" stroke-width=".8"/><path d="M350 138q-4 1-4 6 1 4 5 2 5-3 3-8-2-3-4 2l-2 11" stroke-width="1.500"/></g>`)}</div>
        <div class="gtop"><div class="drag">${t("Dragging", 42, "vd")}</div><div class="gsep"></div><div class="hier"><svg width="12" height="14">${bulb(1, 0)}</svg>${t("Hierarchy", 61)}</div></div>
        <div class="strip">${TOOLS.map((b, i) => art(331, 154 + i * 23, 27, 23, b))}${art(331, 223, 27, 6, svg`<path d="M335 225.500h19" stroke="#888"/>`)}${TOOLS2.map((b, i) => art(331, 229 + i * 23, 27, 23, b))}<div class="low">${TOOLS3.map((b, i) => art(331, 733 + i * 23, 27, 23, b))}</div></div>
        <graph-view></graph-view>
        <div class="bot">${art(331, 887, 342, 31, svg`${sep(333, 891, 20)}<g transform="translate(341 893)"><path d="M7 .6a4.800 4.800 0 0 0-2.800 8.500l.6 2.400h4.400l.6-2.400A4.800 4.800 0 0 0 7 .6Z" fill="#fbf3a0" stroke="#b8a040" stroke-width=".9"/><rect x="5" y="11.500" width="4" height="4" rx="1" fill="#666"/></g>
          <rect x="363.500" y="895.500" width="15" height="10" rx="1" fill="#c8c8c8" stroke="#888"/><rect x="363" y="895" width="4" height="11" fill="#333"/><circle cx="373" cy="900.500" r="3.500" fill="#668" stroke="#eee"/><circle cx="373" cy="900.500" r="1.500" fill="#a8c0e8"/><path d="M384.500 899h6l-3 3.500Z" fill="#444"/>${sep(395, 891, 20)}
          ${T(403.5, "#444", "#222")}${pressed(422, 891, 24, 21)}<path d="M428 895.500h11.500l-5 5.500 5.500 5h-14Z" fill="#f2c934" stroke="#e0a820"/><g fill="#fff8c0" stroke="#d89a10" stroke-width=".7"><circle cx="428" cy="895.500" r="1.200"/><circle cx="439.500" cy="895.500" r="1.200"/><circle cx="434.500" cy="901" r="1.200"/><circle cx="440" cy="906" r="1.200"/><circle cx="426" cy="906" r="1.200"/></g>${sep(447, 891, 20)}
          ${pressed(451, 891, 23, 21)}${pressed(474, 891, 23, 21)}<path d="M482 909q1-10 11-12" fill="none" stroke="#f09898" stroke-width="2"/><path d="M484 909q1-8 9-10" fill="none" stroke="#f0d080" stroke-width="1.500"/><path d="M486 909q1-7 7-8" fill="none" stroke="#90d898" stroke-width="1.700"/><path d="M488 909q1-5 5-6" fill="none" stroke="#80c0e8" stroke-width="1.500"/><path d="M456 895L467 906M478.500 895L490 906" stroke="#5a8fc8" stroke-width="1.100"/><g fill="#fff" stroke="#5a8fc8"><circle cx="456" cy="895" r="1.200"/><circle cx="467.500" cy="906.500" r="1.200"/><circle cx="478.500" cy="895" r="1.200"/><circle cx="490.500" cy="906.500" r="1.200"/></g>
          ${T(501.5, "#f8f8f8", "#888")}<path d="M525 899.500h89" stroke="#a0a0a0"/><path d="M525 900.500h90" stroke="#fff"/>${knob(539.5, 891.500)}${sep(622, 891, 20)}
          ${serifA(635.5, 906, "#333", 14)}<path d="M640.500 900h4l-2 2.500Z"/>${serifA(658.5, 906, "#4570d8", 14)}<path d="M652.500 905.500h12" stroke="#4570d8"/><path d="M663 900h4l-2 2.500Z" fill="#3060d0"/>`)}
          <div class="font">${t("나눔바른고딕 Bold, 32", 146)}</div>
          ${art(827, 887, 191, 31, svg`<path d="M828 899.500h89" stroke="#a0a0a0"/><path d="M828 900.500h90" stroke="#fff"/>${knob(870.5, 891.500)}<rect x="923" y="893" width="16" height="16"/>
            <rect x="943.500" y="894.500" width="12" height="13" fill="#dbe8f4" stroke="#7c8ea0"/><rect x="946" y="893" width="7" height="3" rx="1" fill="#f0d080" stroke="#a87820" stroke-width=".9"/><path d="M945.500 899h5M945.500 901.500h4M945.500 904h5" stroke="#8098b0"/><path d="M951.500 900.500l5.500 6.500" stroke="#666" stroke-width="3.400"/><path d="M951.500 900.500l5.500 6.500" stroke="#e8e8e8" stroke-width="1.800"/><circle cx="951.500" cy="901" r="2" fill="#eee" stroke="#666" stroke-width=".8"/>
            <path d="M995.500 897l4.500 4.500h-9Z" fill="#999" stroke="#333"/><rect x="991" y="903" width="9" height="3" fill="#eee" stroke="#333"/>`)}</div>
      </div>
    </div>`;
  }

  right() {
    const fold = html`<svg width="9" height="9"><rect x=".5" y=".5" width="8" height="8" fill="#fff" stroke="#777"/><path d="M2 3.500h5l-2.500 2.500Z" fill="#333"/></svg>`;
    return html`<div class="col">
      <div class="panel"><div class="tabs"><div class="tb on w67">${t("Context", 43, "tab")}${closeX}</div><div class="min">${minBox}</div></div>
        <div class="cx">${t("Nodes:", 53, "gb")}${t("270", 25)}<svg width="17" height="18"><circle cx="8.500" cy="9.500" r="7.500" fill="#a9e089" stroke="#3f9c38"/><path d="M8.500 9.500h7.500a7.500 7.500 0 0 1-1 3.500Z" fill="#167018"/><path d="M4 6q4-4 9 0" stroke="#e0f8d0" stroke-width="1.500" fill="none"/></svg>${t("Edges:", 52, "gb")}${t("10060", 41)}<span></span><span class="und">${t("Undirected Graph", 113)}</span></div></div>
      <div class="panel grow"><div class="tabs"><div class="tb on w75">${t("Statistics", 51, "tab")}${closeX}</div><div class="tb w60">${t("Filters", 35, "tab")}</div><div class="min">${minBox}</div></div>
        <div class="settings">${t("Settings", 53)}</div>
        <div class="list">${STATS.map(([h, w, rows]) => html`<div class="sec">${fold}${t(h, w, "gb")}</div>${rows.map(([l, lw, v, vw]) => html`<stat-row .label=${l} .w=${lw} .val=${v ?? ""} .vw=${vw ?? 0}></stat-row>`)}`)}</div></div>
    </div>`;
  }
}
